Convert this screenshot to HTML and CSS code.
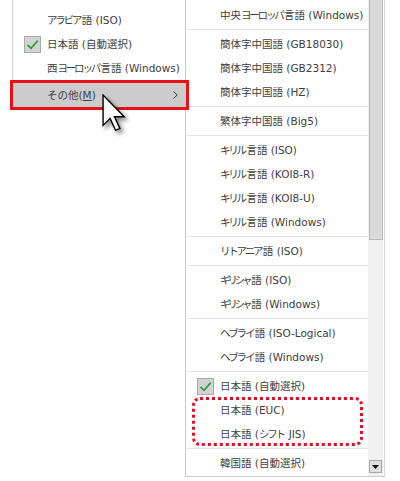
FILE: index.html
```html
<!DOCTYPE html>
<html lang="ja">
<head>
<meta charset="utf-8">
<link rel="stylesheet" href="styles.css">
</head>
<body>
<div class="stage">
  <div class="menu">
    <div class="item"><span class="icon"></span><span class="label"><span class="kn">アラビア</span>語 (ISO)</span></div>
    <div class="item"><span class="icon check"><svg viewBox="0 0 17 17" width="17" height="17"><path d="M3.5 8.8 L7 12.3 L13.8 4.6" fill="none" stroke="#2f9e3a" stroke-width="1.8"/></svg></span><span class="label">日本語 (自動選択)</span></div>
    <div class="item"><span class="icon"></span><span class="label">西<span class="kn">ヨーロッパ</span>言語 (Windows)</span></div>
    <div class="item active"><span class="icon"></span><span class="label">その他(<u>M</u>)</span><svg class="chev" viewBox="0 0 5 8" width="5" height="8"><path d="M0.6 0.6 L4.2 4 L0.6 7.4" fill="none" stroke="#444" stroke-width="1"/></svg></div>
  </div>
  <div class="submenu">
    <div class="list">
      <div class="item"><span class="icon"></span><span class="label">中央<span class="kn">ヨーロッパ</span>言語 (Windows)</span></div>
      <div class="sep"></div>
      <div class="item"><span class="icon"></span><span class="label">簡体字中国語 (GB18030)</span></div>
      <div class="item"><span class="icon"></span><span class="label">簡体字中国語 (GB2312)</span></div>
      <div class="item"><span class="icon"></span><span class="label">簡体字中国語 (HZ)</span></div>
      <div class="sep"></div>
      <div class="item"><span class="icon"></span><span class="label">繁体字中国語 (Big5)</span></div>
      <div class="sep"></div>
      <div class="item"><span class="icon"></span><span class="label"><span class="kn">キリル</span>言語 (ISO)</span></div>
      <div class="item"><span class="icon"></span><span class="label"><span class="kn">キリル</span>言語 (KOI8-R)</span></div>
      <div class="item"><span class="icon"></span><span class="label"><span class="kn">キリル</span>言語 (KOI8-U)</span></div>
      <div class="item"><span class="icon"></span><span class="label"><span class="kn">キリル</span>言語 (Windows)</span></div>
      <div class="sep"></div>
      <div class="item"><span class="icon"></span><span class="label"><span class="kn">リトアニア</span>語 (ISO)</span></div>
      <div class="sep"></div>
      <div class="item"><span class="icon"></span><span class="label"><span class="kn tight">ギリシャ</span>語 (ISO)</span></div>
      <div class="item"><span class="icon"></span><span class="label"><span class="kn tight">ギリシャ</span>語 (Windows)</span></div>
      <div class="sep"></div>
      <div class="item"><span class="icon"></span><span class="label"><span class="kn">ヘブライ</span>語 (ISO-Logical)</span></div>
      <div class="item"><span class="icon"></span><span class="label"><span class="kn">ヘブライ</span>語 (Windows)</span></div>
      <div class="sep"></div>
      <div class="item"><span class="icon check"><svg viewBox="0 0 17 17" width="17" height="17"><path d="M3.5 8.8 L7 12.3 L13.8 4.6" fill="none" stroke="#2f9e3a" stroke-width="1.8"/></svg></span><span class="label">日本語 (自動選択)</span></div>
      <div class="item"><span class="icon"></span><span class="label">日本語 (EUC)</span></div>
      <div class="item"><span class="icon"></span><span class="label">日本語 (<span class="kn">シフト</span> JIS)</span></div>
      <div class="sep"></div>
      <div class="item"><span class="icon"></span><span class="label">韓国語 (自動選択)</span></div>
    </div>
    <div class="scrollbar">
      <div class="thumb"></div>
      <div class="track"></div>
      <div class="arrow-btn"><svg viewBox="0 0 7 4" width="7" height="4"><path d="M0 0 L7 0 L3.5 4 Z" fill="#111"/></svg></div>
    </div>
  </div>
  <div class="redbox"></div>
  <div class="dotbox"></div>
  <svg class="cursor" viewBox="0 0 24 36" width="26" height="39">
    <path d="M1 1 L1 29 L7.5 22.5 L12.5 33.5 L16.5 31.8 L11.5 21 L20.5 21 Z" fill="#fff" stroke="#000" stroke-width="1.3" stroke-linejoin="miter"/>
  </svg>
</div>
</body>
</html>
```

FILE: styles.css
```css
* { box-sizing: border-box; }

html, body {
  margin: 0;
  padding: 0;
  background: #ffffff;
}

body {
  width: 400px;
  height: 481px;
  overflow: hidden;
  font-family: "DejaVu Sans", "Noto Sans CJK JP", sans-serif;
  font-size: 10.5px;
  color: #404040;
}

.stage {
  position: relative;
  display: flex;
  align-items: flex-start;
  width: 400px;
  height: 481px;
}

.menu {
  margin-left: 12px;
  width: 173px;
  height: 110px;
  padding-top: 8px;
  border-left: 1px solid #cfcfcf;
  background: #fff;
}

.item {
  display: flex;
  align-items: center;
  height: 24px;
  padding-left: 11px;
  gap: 6px;
  white-space: nowrap;
}

.icon {
  flex: 0 0 17px;
  width: 17px;
  height: 17px;
}

.icon.check {
  background: #d3d3d3;
  border: 1px solid #a9a9a9;
  display: flex;
  align-items: center;
  justify-content: center;
}

.icon.check svg {
  display: block;
  margin: -1px;
}

.label {
  line-height: 1;
}

.kn {
  letter-spacing: -2.2px;
  margin-right: 1.5px;
}

.kn.tight {
  letter-spacing: -3.2px;
  margin-right: 2px;
}

.menu .item.active {
  margin-top: 2px;
  height: 26px;
  background: #cccccc;
  padding-right: 7px;
}

.chev {
  margin-left: auto;
  display: block;
}

.submenu {
  display: flex;
  width: 200px;
  height: 477px;
  border-left: 1px solid #cccccc;
  border-right: 1px solid #d6d6d6;
  border-bottom: 1px solid #cccccc;
  background: #fff;
}

.list {
  flex: 0 0 182px;
  padding-top: 3px;
}

.sep {
  height: 1px;
  margin: 2px 0 2px 1px;
  background: #e3e3e3;
}

.scrollbar {
  flex: 0 0 15px;
  display: flex;
  flex-direction: column;
  background: #f0f0f0;
  margin-right: 1px;
}

.thumb {
  height: 240px;
  margin: 0 0 0 1px;
  width: 14px;
  background: #dadada;
  border: 1px solid #b9b9b9;
  border-top: none;
}

.track {
  flex: 1;
}

.arrow-btn {
  width: 13px;
  height: 13px;
  margin: 0 0 3px 1px;
  background: #dedede;
  border: 1px solid #a8a8a8;
  display: flex;
  align-items: center;
  justify-content: center;
}

.arrow-btn svg {
  display: block;
}

.redbox {
  position: absolute;
  left: 10px;
  top: 80px;
  width: 179px;
  height: 30px;
  border: 3px solid #e8101a;
}

.dotbox {
  position: absolute;
  left: 192px;
  top: 397px;
  width: 171px;
  height: 49px;
  border: 3px dotted #e0101c;
  border-radius: 8px;
}

.cursor {
  position: absolute;
  left: 102px;
  top: 94px;
  filter: drop-shadow(3px 3px 2px rgba(0, 0, 0, 0.45));
}
```
